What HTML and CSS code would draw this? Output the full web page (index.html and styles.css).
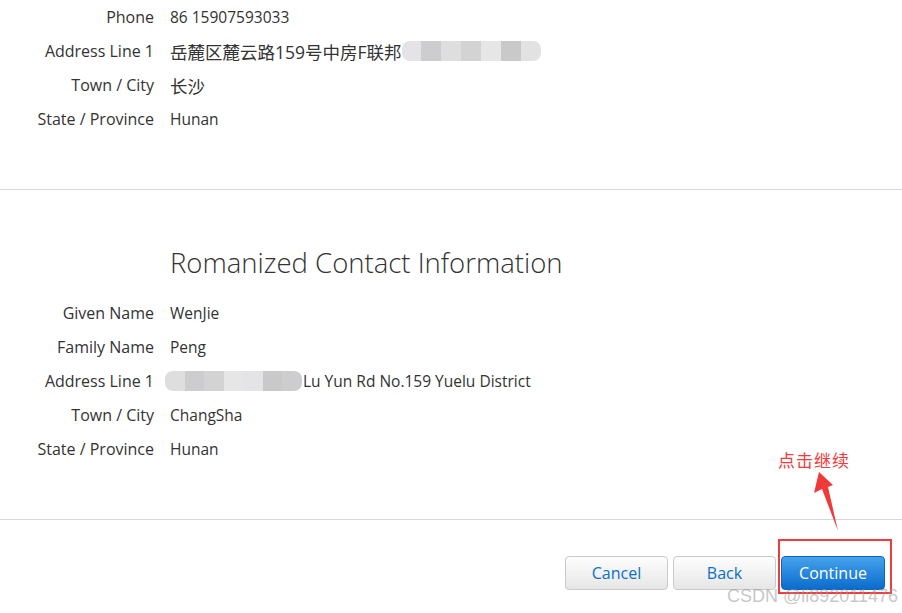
FILE: index.html
```html
<!DOCTYPE html>
<html lang="en">
<head>
<meta charset="utf-8">
<title>Contact Information</title>
<link rel="stylesheet" href="styles.css">
</head>
<body>
<div class="page">
  <section class="section first">
    <div class="row"><div class="label">Phone</div><div class="value">86 15907593033</div></div>
    <div class="row"><div class="label">Address Line 1</div><div class="value cjk">岳麓区麓云路159号中房F联邦<span class="blur blur-a"><i class="b1"></i><i class="b2"></i><i class="b3"></i><i class="b4"></i><i class="b5"></i><i class="b6"></i><i class="b7"></i></span></div></div>
    <div class="row"><div class="label">Town / City</div><div class="value cjk">长沙</div></div>
    <div class="row"><div class="label">State / Province</div><div class="value">Hunan</div></div>
  </section>
  <hr class="divider">
  <section class="section second">
    <h2 class="heading">Romanized Contact Information</h2>
    <div class="row"><div class="label">Given Name</div><div class="value">WenJie</div></div>
    <div class="row"><div class="label">Family Name</div><div class="value">Peng</div></div>
    <div class="row"><div class="label">Address Line 1</div><div class="value"><span class="blur blur-b"><i class="b3"></i><i class="b2"></i><i class="b4"></i><i class="b5"></i><i class="b1"></i><i class="b6"></i><i class="b2"></i></span>Lu Yun Rd No.159 Yuelu District</div></div>
    <div class="row"><div class="label">Town / City</div><div class="value">ChangSha</div></div>
    <div class="row"><div class="label">State / Province</div><div class="value">Hunan</div></div>
  </section>
  <hr class="divider">
  <div class="actions">
    <button class="btn">Cancel</button>
    <button class="btn">Back</button>
    <button class="btn primary">Continue</button>
  </div>

  <div class="note">点击继续</div>
  <svg class="arrow" width="40" height="70" viewBox="0 0 40 70">
    <polygon points="14,4 9,25 17,21 33,63 23,19 28,17" fill="#f03a3a"/>
  </svg>
  <div class="highlight"></div>
  <div class="watermark">CSDN @li892011476</div>
</div>
</body>
</html>
```
FILE: styles.css
```css
* { box-sizing: border-box; }
html, body { margin: 0; padding: 0; background: #fff; }
body {
  font-family: "Open Sans", "Noto Sans CJK SC", sans-serif;
  color: #333;
  font-size: 16px;
}
.page { position: relative; width: 902px; height: 613px; overflow: hidden; }
.section.first { padding-bottom: 53px; }
.section.second { padding-top: 53px; padding-bottom: 53px; }
.row { display: flex; height: 34px; align-items: center; }
.label { width: 154px; text-align: right; color: #333; font-size: 16px; }
.value { margin-left: 16px; display: flex; align-items: center; font-size: 15.5px; }
.value.cjk { font-size: 17.5px; }
.divider { margin: 0; border: 0; height: 1px; background: #d6d6d6; }
.heading {
  margin: 0 0 13px 170px;
  font-family: "Open Sans", sans-serif;
  font-weight: 300;
  font-size: 27.5px;
  line-height: 40px;
  color: #333;
}
.blur { display: inline-flex; height: 20px; border-radius: 8px; overflow: hidden; }
.blur i { display: block; width: 20px; height: 20px; }
.blur-a { width: 139px; }
.blur-b { width: 137px; margin-right: 1px; margin-left: -5px; }
.b1 { background: #e4e4e6; }
.b2 { background: #cdcdd0; }
.b3 { background: #dededf; }
.b4 { background: #d3d3d3; }
.b5 { background: #e6e6e6; }
.b6 { background: #c9c9c9; }
.b7 { background: #e2e2e2; }
.actions { display: flex; justify-content: flex-end; gap: 5px; padding: 36px 17px 0 0; }
.btn {
  width: 103px; height: 34px;
  font-family: "Open Sans", sans-serif; font-size: 16px;
  color: #0a70c8;
  background: linear-gradient(#fdfdfd, #e6e6e6);
  border: 1px solid #cacaca;
  border-radius: 4px;
}
.btn.primary {
  width: 104px;
  color: #fff;
  background: linear-gradient(#45a2ec, #0b6ccd);
  border-color: #0e65c0;
}
.note {
  position: absolute; left: 778px; top: 447px;
  font-family: "Noto Sans CJK SC", sans-serif;
  font-size: 17px; color: #f43a3a; letter-spacing: 1px;
}
.arrow { position: absolute; left: 805px; top: 468px; }
.highlight {
  position: absolute; left: 778px; top: 539px; width: 114px; height: 55px;
  border: 2px solid #f23c3c;
}
.watermark {
  position: absolute; left: 727px; top: 586px;
  font-family: "Liberation Sans", sans-serif; font-size: 18px;
  color: rgba(150,150,150,0.55);
}
```
